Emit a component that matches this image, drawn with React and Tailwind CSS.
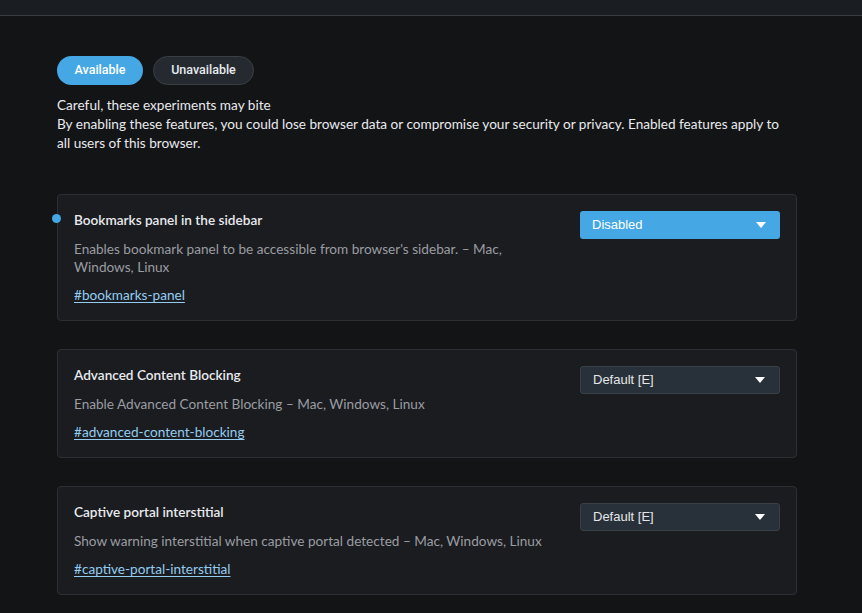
import React from "react";

const flags = [
  {
    title: "Bookmarks panel in the sidebar",
    desc: "Enables bookmark panel to be accessible from browser's sidebar. – Mac, Windows, Linux",
    link: "#bookmarks-panel",
    value: "Disabled",
    changed: true,
  },
  {
    title: "Advanced Content Blocking",
    desc: "Enable Advanced Content Blocking – Mac, Windows, Linux",
    link: "#advanced-content-blocking",
    value: "Default [E]",
  },
  {
    title: "Captive portal interstitial",
    desc: "Show warning interstitial when captive portal detected – Mac, Windows, Linux",
    link: "#captive-portal-interstitial",
    value: "Default [E]",
  },
];

function Arrow() {
  return (
    <svg width="10" height="6" viewBox="0 0 10 6" className="shrink-0">
      <path d="M0 0 L10 0 L5 6 Z" fill="#ffffff" />
    </svg>
  );
}

function Flag({ f }) {
  return (
    <div className="relative flex justify-between rounded-[4px] border border-[#2c2f34] bg-[#1a1c20] pl-4 pr-4 pt-4 pb-4">
      {f.changed && (
        <span className="absolute left-[-6px] top-[19px] h-[9px] w-[9px] rounded-full bg-[#45a7e3]" />
      )}
      <div className="w-[480px]">
        <div className="text-[13.6px] leading-[19px] font-semibold text-[#e8eaed]">{f.title}</div>
        <div className="mt-[10px] text-[13.6px] leading-[18px] text-[#9a9da2]">{f.desc}</div>
        <div className="mt-[10px] text-[13.6px] leading-[18px]">
          <a className="text-[#94ccf0] underline underline-offset-2">{f.link}</a>
        </div>
      </div>
      <div
        className={
          f.changed
            ? "flex h-[28px] w-[200px] items-center justify-between rounded-[3px] bg-[#45a7e3] pl-3 pr-[14px] text-[13px] text-white"
            : "flex h-[28px] w-[200px] items-center justify-between rounded-[3px] border border-[#3a4048] bg-[#283039] pl-3 pr-[14px] text-[13px] text-[#e4e6e8]"
        }
        style={{ fontFamily: '"Liberation Sans", Arial, sans-serif' }}
      >
        <span>{f.value}</span>
        <Arrow />
      </div>
    </div>
  );
}

export default function App() {
  return (
    <div
      className="min-h-[613px] bg-[#131416] text-[#e8eaed]"
      style={{ fontFamily: 'Lato, "Noto Sans", sans-serif' }}
    >
      <div className="h-[16px] border-b border-[#3a3d42] bg-[#1a1d22]" />
      <div className="pl-[57px] pr-[65px] pt-[40px]">
        <div className="flex gap-[10px]" style={{ fontFamily: 'Roboto, sans-serif' }}>
          <button className="h-[29px] w-[86px] rounded-full bg-[#45a7e3] text-[12.5px] font-medium text-white">
            Available
          </button>
          <button className="h-[29px] w-[101px] rounded-full border border-[#3a3f46] bg-[#252a31] text-[12.5px] font-medium text-[#e8eaed]">
            Unavailable
          </button>
        </div>
        <div className="mt-[11px] text-[13.6px] leading-[19px] text-[#e8eaed]">
          <div>Careful, these experiments may bite</div>
          <div className="w-[736px]">
            By enabling these features, you could lose browser data or compromise your security or privacy. Enabled features apply to all users of this browser.
          </div>
        </div>
        <div className="mt-[41px] flex flex-col gap-[28px]">
          {flags.map((f) => (
            <Flag key={f.link} f={f} />
          ))}
        </div>
      </div>
    </div>
  );
}
